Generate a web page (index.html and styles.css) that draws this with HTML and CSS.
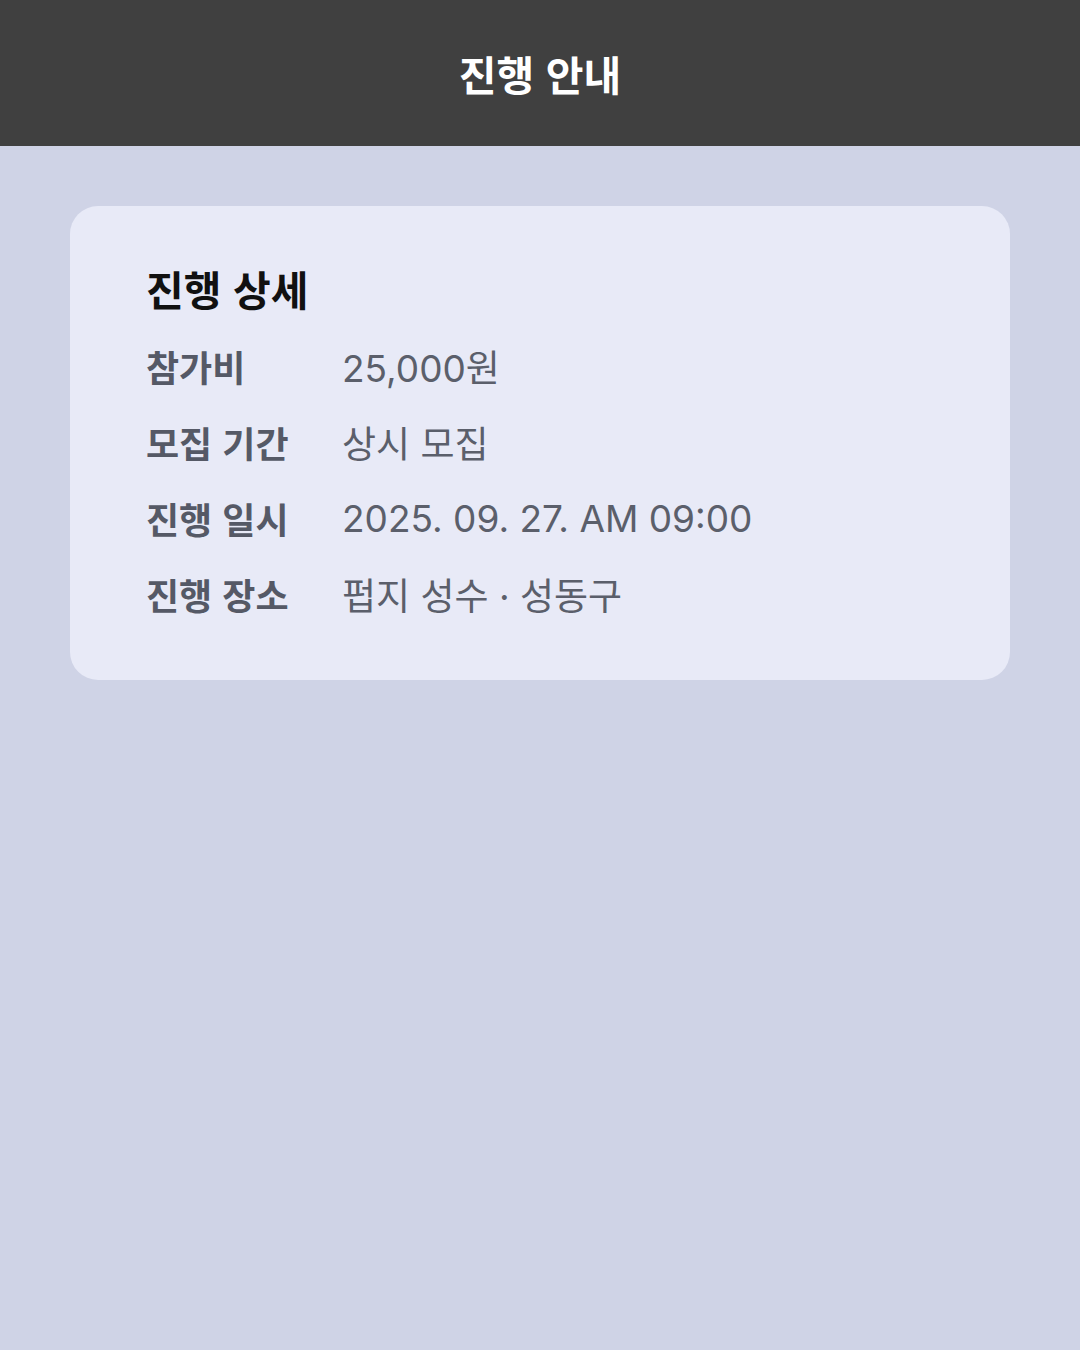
FILE: index.html
```html
<!DOCTYPE html>
<html lang="ko">
  <head>
    <meta charset="utf-8">
    <title>진행 안내</title>
    <link rel="stylesheet" href="styles.css">
  </head>
  <body>
    <header class="topbar">
      <h1>진행 안내</h1>
    </header>

    <main class="content">
      <section class="card">
        <h2>진행 상세</h2>
        <dl class="details">
          <div class="row"><dt>참가비</dt><dd>25,000원</dd></div>
          <div class="row"><dt>모집 기간</dt><dd>상시 모집</dd></div>
          <div class="row"><dt>진행 일시</dt><dd>2025. 09. 27. AM 09:00</dd></div>
          <div class="row"><dt>진행 장소</dt><dd>펍지 성수 · 성동구</dd></div>
        </dl>
      </section>
    </main>
  </body>
</html>
```

FILE: styles.css
```css
body { margin: 0; min-height: 1350px; background: #cfd3e6; font-family: "Noto Sans CJK KR", "Noto Sans", sans-serif; }

.topbar { height: 146px; background: #404040; display: flex; align-items: center; justify-content: center; }
.topbar h1 { margin: 0; color: #fff; font-size: 41px; font-weight: 700; line-height: 1; }

.content { padding: 60px 70px; }

.card { background: #e8eaf7; border-radius: 28px; padding: 56px 76px 48px; }
.card h2 { margin: 0 0 14px; font-size: 41px; font-weight: 700; line-height: 52px; color: #111; }

.details { margin: 0; }
.row { display: flex; height: 76px; align-items: center; font-size: 36px; }
.row dt { width: 196px; flex-shrink: 0; font-weight: 700; color: #555966; }
.row dd { margin: 0; color: #5b5f6b; font-weight: 400; font-family: Inter, "Noto Sans CJK KR", sans-serif; font-size: 37px; }
```
